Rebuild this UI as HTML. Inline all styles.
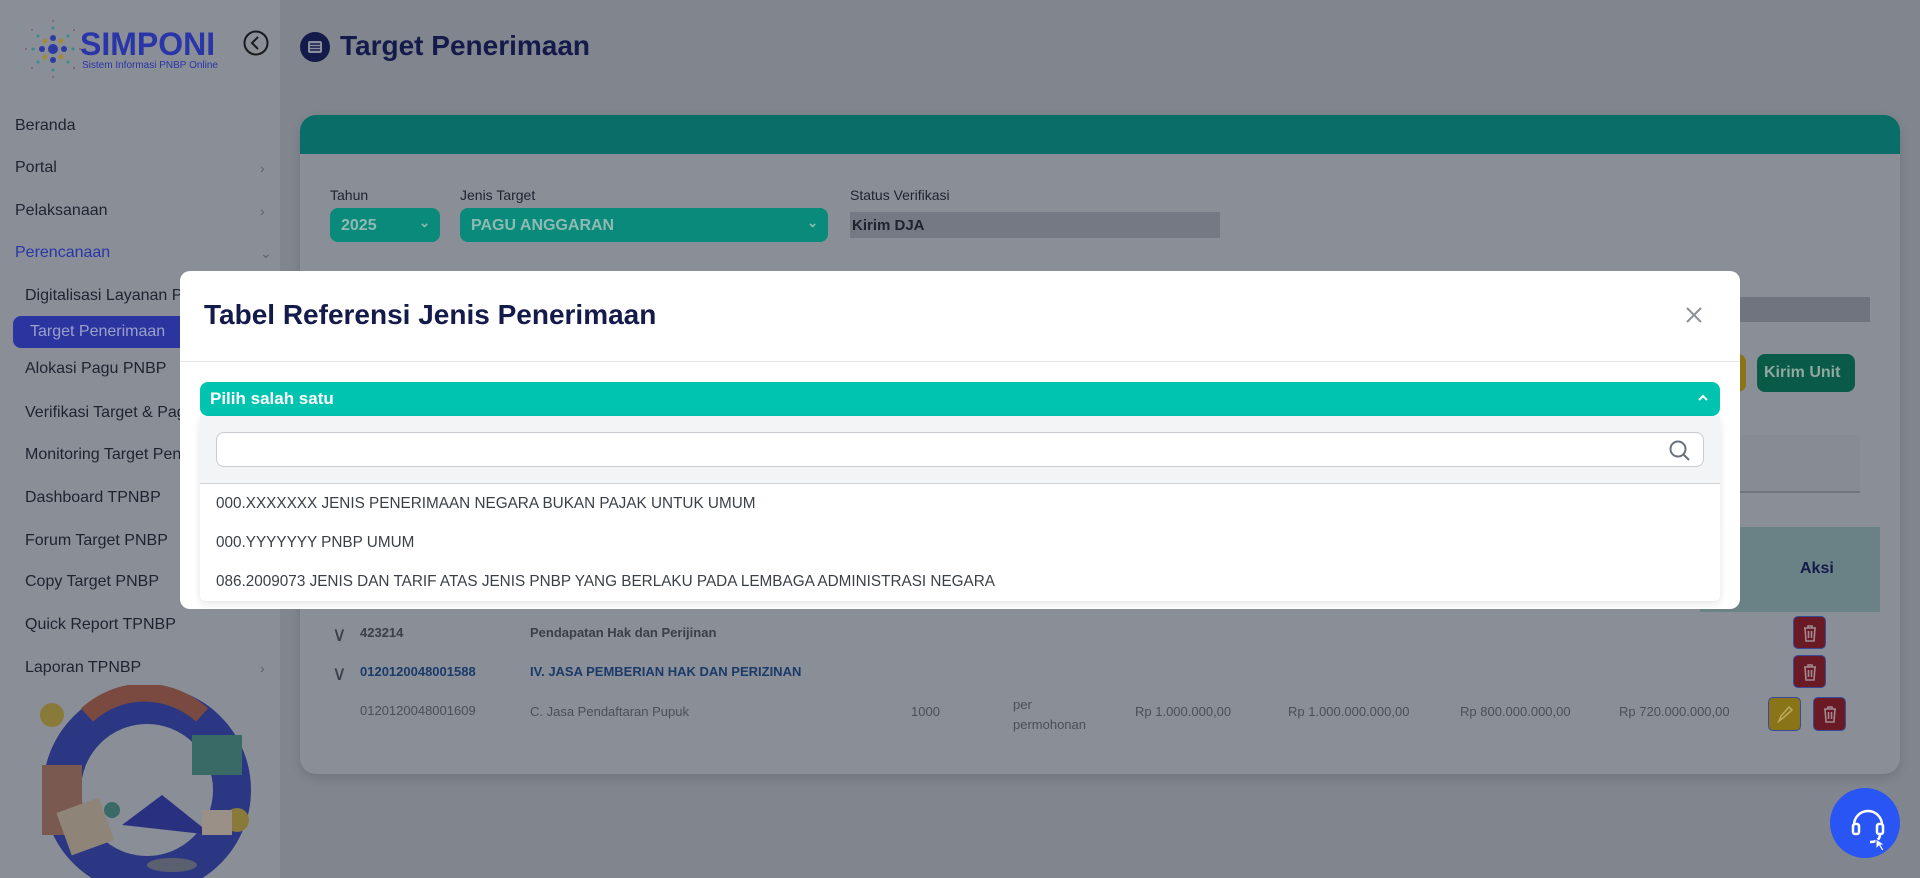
<!DOCTYPE html>
<html><head><meta charset="utf-8"><style>
*{box-sizing:border-box;margin:0;padding:0}
body{width:1920px;height:878px;overflow:hidden;font-family:"Liberation Sans",sans-serif;background:#80858e;position:relative}
.a{position:absolute}
.side{left:0;top:0;width:280px;height:878px;background:#898e97}
.mi{position:absolute;left:15px;font-size:16px;color:#1f2330}
.sub{left:25px}
.chev{position:absolute;left:260px;color:#5c616b;font-size:14px}
.card{left:300px;top:115px;width:1600px;height:659px;background:#898e97;border-radius:16px;overflow:hidden;box-shadow:0 4px 10px rgba(0,0,0,.12)}
.t{font-size:14px;color:#4a4f58}
</style></head><body>
<div class="a side">
 <svg class="a" style="left:18px;top:18px" width="70" height="62" viewBox="0 0 70 62">
  <g fill="#2e3aa0"><circle cx="35" cy="31" r="5"/><circle cx="24" cy="31" r="3"/><circle cx="46" cy="31" r="3"/><circle cx="35" cy="20" r="3"/><circle cx="35" cy="42" r="3"/></g>
  <g fill="#a08a3a"><circle cx="27" cy="23" r="2.5"/><circle cx="43" cy="23" r="2.5"/><circle cx="27" cy="39" r="2.5"/><circle cx="43" cy="39" r="2.5"/></g>
  <g fill="#3a8a8a"><circle cx="15" cy="31" r="1.5"/><circle cx="55" cy="31" r="1.5"/><circle cx="35" cy="10" r="1.5"/><circle cx="35" cy="52" r="1.5"/><circle cx="20" cy="18" r="1.5"/><circle cx="50" cy="18" r="1.5"/><circle cx="20" cy="44" r="1.5"/><circle cx="50" cy="44" r="1.5"/></g>
  <g fill="#8a5a6a"><circle cx="8" cy="31" r="1"/><circle cx="62" cy="31" r="1"/><circle cx="35" cy="3" r="1"/><circle cx="35" cy="59" r="1"/><circle cx="14" cy="12" r="1"/><circle cx="56" cy="12" r="1"/><circle cx="14" cy="50" r="1"/><circle cx="56" cy="50" r="1"/></g>
 </svg>
 <div class="a" style="left:80px;top:26px;font-size:32px;font-weight:bold;color:#2a35a8">SIMPONI</div>
 <div class="a" style="left:82px;top:60px;font-size:10px;color:#2a35a8">Sistem Informasi PNBP Online</div>
 <svg class="a" style="left:242px;top:29px" width="28" height="28"><circle cx="14" cy="14" r="11.5" fill="none" stroke="#1a1a1a" stroke-width="2"/><path d="M16 8 L10 14 L16 20" fill="none" stroke="#1a1a1a" stroke-width="2"/></svg>
 <div class="mi" style="top:117px">Beranda</div>
 <div class="mi" style="top:159px">Portal</div><div class="chev" style="top:160px">›</div>
 <div class="mi" style="top:202px">Pelaksanaan</div><div class="chev" style="top:203px">›</div>
 <div class="mi" style="top:244px;color:#2a35a8">Perencanaan</div><div class="chev" style="top:245px">⌄</div>
 <div class="mi sub" style="top:287px">Digitalisasi Layanan PNBP</div>
 <div class="a" style="left:13px;top:316px;width:200px;height:32px;background:#2b35a0;border-radius:8px"></div>
 <div class="mi" style="left:30px;top:323px;color:#9aa0c8">Target Penerimaan</div>
 <div class="mi sub" style="top:360px">Alokasi Pagu PNBP</div>
 <div class="mi sub" style="top:404px">Verifikasi Target &amp; Pagu</div>
 <div class="mi sub" style="top:446px">Monitoring Target Penerimaan</div>
 <div class="mi sub" style="top:489px">Dashboard TPNBP</div>
 <div class="mi sub" style="top:532px">Forum Target PNBP</div>
 <div class="mi sub" style="top:573px">Copy Target PNBP</div>
 <div class="mi sub" style="top:616px">Quick Report TPNBP</div>
 <div class="mi sub" style="top:659px">Laporan TPNBP</div><div class="chev" style="top:660px">›</div>
 <svg class="a" style="left:12px;top:685px" width="270" height="193" viewBox="0 0 270 193">
  <circle cx="135" cy="105" r="85" fill="none" stroke="#2c3784" stroke-width="38"/>
  <path d="M75 30 A85 85 0 0 1 190 30" fill="none" stroke="#7a4a40" stroke-width="18"/>
  <circle cx="135" cy="105" r="62" fill="#898e97"/>
  <rect x="180" y="50" width="50" height="40" fill="#3a6a66"/>
  <rect x="30" y="80" width="40" height="70" fill="#7a5a50"/>
  <rect x="50" y="120" width="45" height="45" fill="#8e8478" transform="rotate(-20 70 140)"/>
  <path d="M110 140 L150 110 L200 150 Z" fill="#2a3080"/>
  <circle cx="225" cy="135" r="12" fill="#8a7a3a"/>
  <circle cx="40" cy="30" r="12" fill="#8a7a3a"/>
  <circle cx="100" cy="125" r="8" fill="#3a6a66"/>
  <ellipse cx="160" cy="180" rx="25" ry="7" fill="#5a6070"/>
  <rect x="190" y="125" width="30" height="25" fill="#9a9088"/>
 </svg>
</div>

<svg class="a" style="left:300px;top:32px" width="30" height="30"><circle cx="15" cy="15" r="15" fill="#141a4a"/><rect x="8" y="9" width="14" height="12" rx="2" fill="#8a8fa0"/><g stroke="#141a4a" stroke-width="1.5"><line x1="10" y1="12" x2="20" y2="12"/><line x1="10" y1="15" x2="20" y2="15"/><line x1="10" y1="18" x2="20" y2="18"/></g></svg>
<div class="a" style="left:340px;top:30px;font-size:28px;font-weight:bold;color:#141a4a">Target Penerimaan</div>

<div class="a card">
 <div class="a" style="left:0;top:0;width:1600px;height:39px;background:#0a6e68"></div>
 <div class="a t" style="left:30px;top:72px;color:#1f2330">Tahun</div>
 <div class="a" style="left:30px;top:93px;width:110px;height:34px;background:#0a8a7a;border-radius:8px;color:#8fbab4;font-weight:bold;font-size:16px;padding:9px 11px">2025<span style="position:absolute;right:10px;top:7px;font-size:13px">⌄</span></div>
 <div class="a t" style="left:160px;top:72px;color:#1f2330">Jenis Target</div>
 <div class="a" style="left:160px;top:93px;width:368px;height:34px;background:#0a8a7a;border-radius:8px;color:#8fbab4;font-weight:bold;font-size:16px;padding:9px 11px">PAGU ANGGARAN<span style="position:absolute;right:10px;top:7px;font-size:13px">⌄</span></div>
 <div class="a t" style="left:550px;top:72px;color:#1f2330">Status Verifikasi</div>
 <div class="a" style="left:550px;top:97px;width:370px;height:26px;background:#747984;color:#1f2330;font-weight:bold;font-size:15px;padding:5px 2px">Kirim DJA</div>
 <div class="a" style="left:1400px;top:182px;width:170px;height:25px;background:#6f747e"></div>
 <div class="a" style="left:1420px;top:239px;width:26px;height:38px;background:#8a7418;border-radius:8px"></div>
 <div class="a" style="left:1457px;top:239px;width:98px;height:38px;background:#0a5a48;border-radius:8px;color:#8fa8a0;font-weight:bold;font-size:16px;padding:10px 7px">Kirim Unit</div>
 <div class="a" style="left:1400px;top:320px;width:160px;height:58px;background:#868b94;border-bottom:2px solid #6f747e"></div>
 <div class="a" style="left:1400px;top:412px;width:180px;height:85px;background:#6a8286"></div>
 <div class="a" style="left:1500px;top:445px;font-weight:bold;font-size:16px;color:#141a4a">Aksi</div>
 <div class="a t" style="left:32px;top:507px;font-size:20px;color:#3a3f48">∨</div>
 <div class="a t" style="left:60px;top:510px;font-weight:bold;font-size:13px;color:#3a3f48">423214</div>
 <div class="a t" style="left:230px;top:510px;font-weight:bold;font-size:13px;color:#3a3f48">Pendapatan Hak dan Perijinan</div>
 <div class="a t" style="left:32px;top:546px;font-size:20px;color:#3a3f48">∨</div>
 <div class="a t" style="left:60px;top:549px;font-weight:bold;font-size:13px;color:#1a3a6a">0120120048001588</div>
 <div class="a t" style="left:230px;top:549px;font-weight:bold;font-size:13px;color:#1a3a6a">IV. JASA PEMBERIAN HAK DAN PERIZINAN</div>
 <div class="a t" style="left:60px;top:588px;font-size:13px">0120120048001609</div>
 <div class="a t" style="left:230px;top:589px;font-size:13px">C. Jasa Pendaftaran Pupuk</div>
 <div class="a t" style="left:611px;top:589px;font-size:13px">1000</div>
 <div class="a t" style="left:713px;top:580px;font-size:13px;line-height:20px">per<br>permohonan</div>
 <div class="a t" style="left:835px;top:589px;font-size:13px">Rp 1.000.000,00</div>
 <div class="a t" style="left:988px;top:589px;font-size:13px">Rp 1.000.000.000,00</div>
 <div class="a t" style="left:1160px;top:589px;font-size:13px">Rp 800.000.000,00</div>
 <div class="a t" style="left:1319px;top:589px;font-size:13px">Rp 720.000.000,00</div>
 <div class="a" style="left:1493px;top:501px;width:33px;height:33px;background:#6a1a25;border:1.5px solid #3a4a9a;border-radius:5px"></div>
 <div class="a" style="left:1493px;top:540px;width:33px;height:33px;background:#6a1a25;border:1.5px solid #3a4a9a;border-radius:5px"></div>
 <div class="a" style="left:1468px;top:582px;width:33px;height:34px;background:#8a7418;border:1.5px solid #3a4a9a;border-radius:5px"></div>
 <div class="a" style="left:1513px;top:582px;width:33px;height:34px;background:#6a1a25;border:1.5px solid #3a4a9a;border-radius:5px"></div>
 <svg class="a" style="left:1500px;top:508px" width="20" height="20" fill="none" stroke="#a08a90" stroke-width="1.6"><path d="M4 5h12M8 5V3h4v2M5 5l1 13h8l1-13M8.5 8v7M11.5 8v7"/></svg>
 <svg class="a" style="left:1500px;top:547px" width="20" height="20" fill="none" stroke="#a08a90" stroke-width="1.6"><path d="M4 5h12M8 5V3h4v2M5 5l1 13h8l1-13M8.5 8v7M11.5 8v7"/></svg>
 <svg class="a" style="left:1520px;top:589px" width="20" height="20" fill="none" stroke="#a08a90" stroke-width="1.6"><path d="M4 5h12M8 5V3h4v2M5 5l1 13h8l1-13M8.5 8v7M11.5 8v7"/></svg>
 <svg class="a" style="left:1475px;top:589px" width="20" height="20" fill="none" stroke="#b8a860" stroke-width="1.6"><path d="M4 17l2-5 8-9 3 3-9 8z"/></svg>
</div>

<div class="a" style="left:1830px;top:788px;width:70px;height:70px;border-radius:50%;background:#2a55f5"></div>
<svg class="a" style="left:1848px;top:805px" width="40" height="46" fill="none" stroke="#fff" stroke-width="2.5"><path d="M6 20a14 14 0 0 1 28 0"/><rect x="5" y="19" width="6" height="10" rx="2"/><rect x="29" y="19" width="6" height="10" rx="2"/><path d="M32 29q0 8-10 8"/><path d="M28 34l0 10 3-3 3 5 2-1-3-5 4 0z" fill="#fff" stroke="#2a55f5" stroke-width="1"/></svg>

<div class="a" style="left:180px;top:271px;width:1560px;height:338px;background:#fff;border-radius:10px;overflow:hidden">
 <div class="a" style="left:24px;top:28px;font-size:28px;font-weight:bold;color:#141a4a">Tabel Referensi Jenis Penerimaan</div>
 <svg class="a" style="left:1505px;top:35px" width="18" height="18" stroke="#8a8f98" stroke-width="2"><path d="M2 2L16 16M16 2L2 16"/></svg>
 <div class="a" style="left:0;top:90px;width:1560px;height:1px;background:#e4e6ea"></div>
 <div class="a" style="left:20px;top:111px;width:1520px;height:34px;background:#00c4b0;border-radius:8px;color:#fff;font-weight:bold;font-size:17px;padding:7px 10px">Pilih salah satu
  <svg class="a" style="right:10px;top:11px" width="14" height="10" fill="none" stroke="#fff" stroke-width="2"><path d="M3 7L7 3L11 7"/></svg></div>
 <div class="a" style="left:20px;top:145px;width:1520px;height:185px;background:#fff;box-shadow:0 3px 8px rgba(0,0,0,.1);border-radius:0 0 6px 6px">
  <div class="a" style="left:0;top:0;width:1520px;height:68px;background:#f3f4f6;border-bottom:1px solid #d0d3d8"></div>
  <div class="a" style="left:16px;top:16px;width:1488px;height:35px;background:#fff;border:1px solid #c8ccd2;border-radius:8px"></div>
  <svg class="a" style="left:1468px;top:23px" width="24" height="24" fill="none" stroke="#6a707a" stroke-width="2"><circle cx="10" cy="10" r="7.5"/><path d="M15.5 15.5L21 21"/></svg>
  <div class="a" style="left:16px;top:79px;font-size:15.3px;color:#3a3f48">000.XXXXXXX JENIS PENERIMAAN NEGARA BUKAN PAJAK UNTUK UMUM</div>
  <div class="a" style="left:16px;top:118px;font-size:15.3px;color:#3a3f48">000.YYYYYYY PNBP UMUM</div>
  <div class="a" style="left:16px;top:157px;font-size:15.3px;color:#3a3f48">086.2009073 JENIS DAN TARIF ATAS JENIS PNBP YANG BERLAKU PADA LEMBAGA ADMINISTRASI NEGARA</div>
 </div>
</div>
</body></html>
